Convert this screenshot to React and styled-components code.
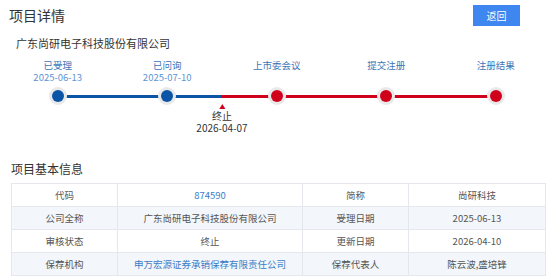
import styled, { createGlobalStyle } from "styled-components";

const GlobalStyle = createGlobalStyle`
  body {
    margin: 0;
    background: #fff;
    font-family: "Noto Sans CJK SC", "Noto Sans", sans-serif;
    color: #333;
  }
`;

const Page = styled.div`
  width: 554px;
  height: 276px;
  overflow: hidden;
`;

const Header = styled.div`
  display: flex;
  justify-content: space-between;
  align-items: center;
  padding: 5px 34px 0 9px;
  height: 21px;
`;

const Title = styled.h1`
  margin: 0;
  font-size: 14px;
  font-weight: 400;
  line-height: 21px;
  color: #333;
`;

const BackButton = styled.button`
  width: 47px;
  height: 21px;
  border: none;
  background: #3e86f0;
  color: #fff;
  font-family: inherit;
  font-size: 10px;
  padding: 0;
`;

const Company = styled.div`
  margin-top: 9px;
  padding-left: 16px;
  font-size: 11px;
  line-height: 16px;
  color: #333;
`;

const Steps = styled.div`
  display: grid;
  grid-template-columns: repeat(5, 109.5px);
  margin: 8px 0 0 3px;
`;

const Step = styled.div`
  position: relative;
  display: flex;
  flex-direction: column;
  align-items: center;
`;

const StepLabel = styled.div`
  font-size: 9.5px;
  line-height: 12px;
  color: #3b74b8;
`;

const StepDate = styled.div`
  font-size: 9.5px;
  line-height: 12px;
  height: 12px;
  color: #5d94d6;
`;

const Track = styled.div`
  position: relative;
  width: 100%;
  height: 12px;
  margin-top: 7px;
  display: flex;
  align-items: center;
`;

const Half = styled.div`
  flex: 1;
  height: 3px;
  background: ${(p) => p.$color || "transparent"};
`;

const Dot = styled.div`
  position: absolute;
  left: 50%;
  top: 0;
  width: 12px;
  height: 12px;
  margin-left: -6px;
  border-radius: 50%;
  background: ${(p) => p.$color};
  box-shadow: 0 0 0 3px #e9e9e9;
`;

const StopMarker = styled.div`
  position: absolute;
  left: 100%;
  top: 45px;
  transform: translateX(-50%);
  display: flex;
  flex-direction: column;
  align-items: center;
  white-space: nowrap;
`;

const Triangle = styled.div`
  width: 0;
  height: 0;
  border-left: 3px solid transparent;
  border-right: 3px solid transparent;
  border-bottom: 5px solid #d0021b;
`;

const StopText = styled.div`
  font-size: 10px;
  line-height: 12px;
  color: #333;
  margin-top: 1px;
`;

const StopDate = styled(StopText)`
  margin-top: 0;
`;

const SectionTitle = styled.h2`
  margin: 59px 0 0 11px;
  font-size: 12px;
  font-weight: 400;
  line-height: 16px;
  color: #333;
`;

const Table = styled.table`
  margin: 6px 0 0 11px;
  width: 534px;
  border-collapse: collapse;
  table-layout: fixed;
`;

const Row = styled.tr`
  background: ${(p) => (p.$alt ? "#f3f6fa" : "#fff")};
`;

const Cell = styled.td`
  height: 22px;
  padding: 0;
  border: 1px solid #e4e7eb;
  text-align: center;
  font-size: 9.5px;
  line-height: 22px;
  color: ${(p) => (p.$link ? "#3a7bc8" : "#555")};
`;

const BLUE = "#0b55a6";
const RED = "#d0021b";

const steps = [
  { label: "已受理", date: "2025-06-13", left: null, right: BLUE, dot: BLUE },
  { label: "已问询", date: "2025-07-10", left: BLUE, right: BLUE, dot: BLUE, stop: true },
  { label: "上市委会议", date: "", left: RED, right: RED, dot: RED },
  { label: "提交注册", date: "", left: RED, right: RED, dot: RED },
  { label: "注册结果", date: "", left: RED, right: null, dot: RED },
];

const rows = [
  [["代码"], ["874590", true], ["简称"], ["尚研科技"]],
  [["公司全称"], ["广东尚研电子科技股份有限公司"], ["受理日期"], ["2025-06-13"]],
  [["审核状态"], ["终止"], ["更新日期"], ["2026-04-10"]],
  [["保荐机构"], ["申万宏源证券承销保荐有限责任公司", true], ["保荐代表人"], ["陈云波,盛培锋"]],
];

export default function App() {
  return (
    <Page>
      <GlobalStyle />
      <Header>
        <Title>项目详情</Title>
        <BackButton>返回</BackButton>
      </Header>
      <Company>广东尚研电子科技股份有限公司</Company>
      <Steps>
        {steps.map((s) => (
          <Step key={s.label}>
            <StepLabel>{s.label}</StepLabel>
            <StepDate>{s.date}</StepDate>
            <Track>
              <Half $color={s.left} />
              <Half $color={s.right} />
              <Dot $color={s.dot} />
            </Track>
            {s.stop && (
              <StopMarker>
                <Triangle />
                <StopText>终止</StopText>
                <StopDate>2026-04-07</StopDate>
              </StopMarker>
            )}
          </Step>
        ))}
      </Steps>
      <SectionTitle>项目基本信息</SectionTitle>
      <Table>
        <colgroup>
          <col style={{ width: 106 }} />
          <col style={{ width: 185 }} />
          <col style={{ width: 106 }} />
          <col style={{ width: 137 }} />
        </colgroup>
        <tbody>
          {rows.map((r, i) => (
            <Row key={i} $alt={i % 2 === 1}>
              {r.map(([t, link], j) => (
                <Cell key={j} $link={link}>
                  {t}
                </Cell>
              ))}
            </Row>
          ))}
        </tbody>
      </Table>
    </Page>
  );
}
